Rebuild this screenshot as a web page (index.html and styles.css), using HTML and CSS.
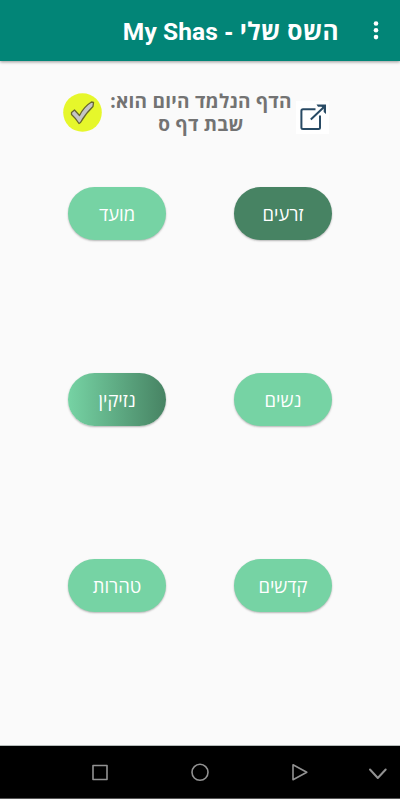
FILE: index.html
```html
<!DOCTYPE html>
<html lang="he" dir="rtl">
<head>
<meta charset="utf-8">
<title>My Shas - השס שלי</title>
<link rel="stylesheet" href="styles.css">
</head>
<body>
<header class="appbar">
  <button class="more" aria-label="תפריט"><svg width="6" height="20" viewBox="0 0 6 20"><circle cx="3" cy="2.500" r="2.3"/><circle cx="3" cy="9.300" r="2.3"/><circle cx="3" cy="16.100" r="2.3"/></svg></button>
  <h1 class="title">השס שלי - <bdi class="latin">My Shas</bdi></h1>
</header>
<main class="content">
  <section class="today">
    <svg class="link" width="33" height="33" viewBox="0 0 33 33"><rect width="33" height="33" fill="#fff"/><path d="M19.500 8.300H7Q5.400 8.300 5.400 9.900V26.500Q5.400 28 7 28H22.500Q24 28 24 26.500V14.500M14.800 18.500L28 6" fill="none" stroke="#284a64" stroke-width="2"/><path d="M20.500 3.600H30V13L27.700 11V7.500L25.500 5.800H22Z" fill="#284a64"/></svg>
    <div class="daf"><p>הדף הנלמד היום הוא:</p><p>שבת דף ס</p></div>
    <svg class="check" width="39" height="39" viewBox="0 0 39 39"><circle cx="19.500" cy="19.500" r="19.300" fill="#e6f72b"/><path d="M8.500 19.500L11.500 17L16.500 22.500Q21 13.500 28.500 9L30.500 9.500L30 13.500Q23 20 17.500 29.500L16 30.500Q12.500 25 8.500 21.500Z" fill="#c5c5c7" stroke="#68672d" stroke-width="1.300" stroke-linejoin="round"/></svg>
  </section>
  <nav class="orders">
    <button class="order done">זרעים</button>
    <button class="order">מועד</button>
    <button class="order">נשים</button>
    <button class="order partial">נזיקין</button>
    <button class="order">קדשים</button>
    <button class="order">טהרות</button>
  </nav>
</main>
<footer class="navbar">
  <svg width="400" height="52" viewBox="0 0 400 52"><g fill="none" stroke="#929292" stroke-width="1.600" stroke-linejoin="round" stroke-linecap="round"><rect x="93" y="19.500" width="14" height="14"/><circle cx="200" cy="26.300" r="8"/><path d="M293 18.800V33.800L306.800 26.300Z"/><path d="M370 23.500L377.800 32L385.700 23.500" stroke-width="2"/></g></svg>
</footer>
</body>
</html>
```
FILE: styles.css
```css
* { box-sizing: border-box; }
body {
  margin: 0;
  height: 800px;
  padding-bottom: 1px;
  display: flex;
  flex-direction: column;
  overflow: hidden;
  background: #fafafa;
  font-family: "Open Sans", "Noto Sans", sans-serif;
}
button { border: 0; padding: 0; font-family: inherit; }
.appbar {
  height: 61px;
  display: flex;
  align-items: center;
  gap: 34px;
  padding-right: 21px;
  background: #028577;
  color: #fff;
  box-shadow: 0 1px 3px rgba(0, 0, 0, .4);
}
.more { display: flex; background: none; fill: #fff; }
.title { margin: 0; padding-top: 1px; font-size: 24.5px; line-height: 30px; font-weight: 700; letter-spacing: .4px; white-space: nowrap; }
.latin { font-family: Roboto, sans-serif; font-weight: 700; letter-spacing: .1px; }
.content { flex: 1; }
.today {
  display: flex;
  align-items: flex-start;
  padding: 29px 71px 0 0;
  height: 126px;
}
.link { margin-top: 11px; }
.daf {
  width: 184px;
  margin: 0 3px 0 7px;
  text-align: center;
  white-space: nowrap;
  font-size: 19px;
  letter-spacing: .25px;
  line-height: 23px;
  font-weight: 700;
  color: #737373;
}
.daf p { margin: 0; }
.check { margin-top: 3px; }
.orders {
  display: grid;
  grid-template-columns: 98px 98px;
  grid-auto-rows: 53px;
  gap: 133px 68px;
  padding-right: 68px;
}
.order {
  border-radius: 27px;
  background: #76d3a4;
  color: #fff;
  font-size: 18.4px;
  box-shadow: 0 1px 2px rgba(0, 0, 0, .28);
}
.done { background: #478363; }
.partial { background: linear-gradient(90deg, #76d3a4, #478363); }
.navbar { height: 54px; direction: ltr; background: #000; border-top: 1px solid #b5bcba; border-bottom: 1px solid #555; }
.navbar svg { display: block; }
```
